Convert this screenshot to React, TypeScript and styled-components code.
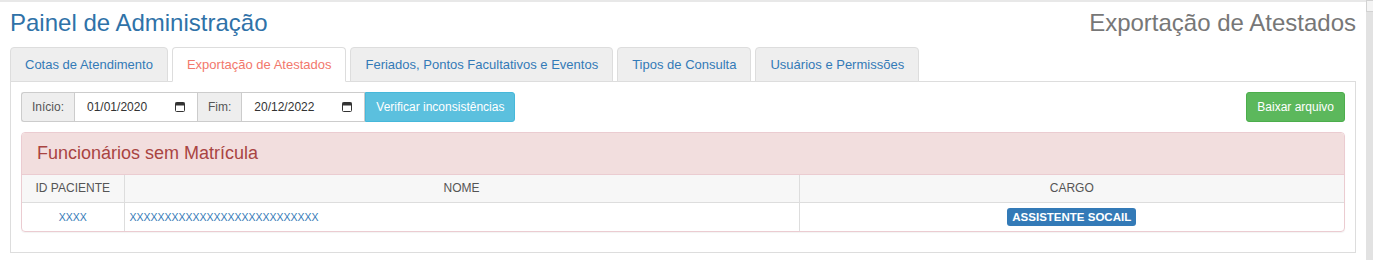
import React from "react";
import styled, { createGlobalStyle } from "styled-components";

const GlobalStyle = createGlobalStyle`
  body {
    margin: 0;
    background: #fff;
    font-family: "Liberation Sans", Arial, Helvetica, sans-serif;
    color: #333;
  }
  * { box-sizing: border-box; }
`;

const tabs = [
  "Cotas de Atendimento",
  "Exportação de Atestados",
  "Feriados, Pontos Facultativos e Eventos",
  "Tipos de Consulta",
  "Usuários e Permissões",
];

function CalendarIcon() {
  return (
    <svg width="10" height="10" viewBox="0 0 10 10">
      <rect x="0.5" y="0.5" width="9" height="9" rx="1" fill="none" stroke="#333" />
      <rect x="0.5" y="0.5" width="9" height="3" fill="#333" />
    </svg>
  );
}

export default function App() {
  return (
    <>
      <GlobalStyle />
      <Page>
        <Main>
          <Header>
            <Title>Painel de Administração</Title>
            <Subtitle>Exportação de Atestados</Subtitle>
          </Header>

          <TabList>
            {tabs.map((t) => (
              <Tab key={t} active={t === "Exportação de Atestados"}>
                {t}
              </Tab>
            ))}
          </TabList>

          <TabContent>
            <Toolbar>
              <InputGroup>
                <Addon first>Início:</Addon>
                <DateField>
                  <span>01/01/2020</span>
                  <CalendarIcon />
                </DateField>
                <Addon>Fim:</Addon>
                <DateField>
                  <span>20/12/2022</span>
                  <CalendarIcon />
                </DateField>
                <Button variant="info" joined>
                  Verificar inconsistências
                </Button>
              </InputGroup>
              <Button variant="success">Baixar arquivo</Button>
            </Toolbar>

            <DangerPanel>
              <PanelHeading>Funcionários sem Matrícula</PanelHeading>
              <Table>
                <thead>
                  <tr>
                    <Th style={{ width: 102 }}>ID PACIENTE</Th>
                    <Th style={{ width: 675 }}>NOME</Th>
                    <Th>CARGO</Th>
                  </tr>
                </thead>
                <tbody>
                  <tr>
                    <Td align="center">
                      <Link>XXXX</Link>
                    </Td>
                    <Td>
                      <Link>XXXXXXXXXXXXXXXXXXXXXXXXXXX</Link>
                    </Td>
                    <Td align="center">
                      <Label>ASSISTENTE SOCAIL</Label>
                    </Td>
                  </tr>
                </tbody>
              </Table>
            </DangerPanel>
          </TabContent>
        </Main>
        <ScrollStrip>
          <ScrollCap />
        </ScrollStrip>
      </Page>
    </>
  );
}

const Page = styled.div`
  display: flex;
  min-height: 260px;
  border-top: 2px solid #e8e8e8;
`;

const Main = styled.div`
  flex: 1;
  padding: 0 10px;
`;

const ScrollStrip = styled.div`
  width: 7px;
  background: #e2e2e2;
  margin-top: -2px;
`;

const ScrollCap = styled.div`
  height: 12px;
  background: #f4f4f4;
  border: 1px solid #d2d2d2;
  border-right: none;
`;

const Header = styled.div`
  display: flex;
  justify-content: space-between;
  align-items: flex-start;
  padding-top: 8px;
`;

const Title = styled.h1`
  margin: 0;
  font-size: 24px;
  line-height: 26px;
  font-weight: 400;
  color: #2f72a8;
`;

const Subtitle = styled.h2`
  margin: 0;
  font-size: 24px;
  line-height: 26px;
  font-weight: 400;
  color: #777;
`;

const TabList = styled.ul`
  display: flex;
  gap: 4px;
  list-style: none;
  margin: 11px 0 0;
  padding: 0;
  border-bottom: 1px solid #ddd;
`;

const Tab = styled.li<{ active?: boolean }>`
  margin-bottom: -1px;
  padding: 8px 14px;
  font-size: 13px;
  line-height: 17px;
  border: 1px solid #ddd;
  border-radius: 4px 4px 0 0;
  background: ${(p) => (p.active ? "#fff" : "#eee")};
  border-bottom-color: ${(p) => (p.active ? "#fff" : "#ddd")};
  color: ${(p) => (p.active ? "#f2786c" : "#337ab7")};
  cursor: pointer;
`;

const TabContent = styled.div`
  border: 1px solid #ddd;
  border-top: none;
  padding: 10px 10px 10px;
`;

const Toolbar = styled.div`
  display: flex;
  justify-content: space-between;
  align-items: center;
`;

const InputGroup = styled.div`
  display: flex;
  height: 30px;
`;

const Addon = styled.div<{ first?: boolean }>`
  display: flex;
  align-items: center;
  padding: 0 10px;
  font-size: 12px;
  color: #555;
  background: #eee;
  border: 1px solid #ccc;
  border-right: none;
  border-left: ${(p) => (p.first ? "1px solid #ccc" : "none")};
  border-radius: ${(p) => (p.first ? "3px 0 0 3px" : "0")};
`;

const DateField = styled.div`
  width: 124px;
  display: flex;
  align-items: center;
  justify-content: space-between;
  padding: 0 12px 0 12px;
  font-size: 12px;
  color: #333;
  background: #fff;
  border: 1px solid #ccc;
`;

const Button = styled.button<{ variant: "info" | "success"; joined?: boolean }>`
  height: 30px;
  padding: 0 10px;
  font-family: inherit;
  font-size: 12px;
  color: #fff;
  cursor: pointer;
  background: ${(p) => (p.variant === "info" ? "#5bc0de" : "#5cb85c")};
  border: 1px solid ${(p) => (p.variant === "info" ? "#46b8da" : "#4cae4c")};
  border-radius: ${(p) => (p.joined ? "0 3px 3px 0" : "3px")};
`;

const DangerPanel = styled.div`
  margin-top: 10px;
  margin-bottom: 10px;
  border: 1px solid #ebccd1;
  border-radius: 4px;
  box-shadow: 0 1px 1px rgba(0, 0, 0, 0.05);
  overflow: hidden;
`;

const PanelHeading = styled.div`
  padding: 10px 15px;
  font-size: 18px;
  line-height: 21px;
  color: #a94442;
  background: #f2dede;
  border-bottom: 1px solid #ebccd1;
`;

const Table = styled.table`
  width: 100%;
  border-collapse: collapse;
  font-size: 12px;
`;

const Th = styled.th`
  padding: 5px;
  line-height: 17px;
  font-weight: 400;
  color: #555;
  background: #f7f7f7;
  border-right: 1px solid #ddd;
  border-bottom: 1px solid #ddd;
  &:last-child { border-right: none; }
`;

const Td = styled.td<{ align?: string }>`
  padding: 5px;
  line-height: 17px;
  text-align: ${(p) => p.align || "left"};
  border-right: 1px solid #ddd;
  &:last-child { border-right: none; }
`;

const Link = styled.a`
  color: #337ab7;
  font-size: 10.5px;
  cursor: pointer;
`;

const Label = styled.span`
  display: inline-block;
  vertical-align: middle;
  padding: 2px 5px;
  font-size: 11.5px;
  line-height: 14px;
  font-weight: 700;
  color: #fff;
  background: #337ab7;
  border-radius: 3px;
`;
